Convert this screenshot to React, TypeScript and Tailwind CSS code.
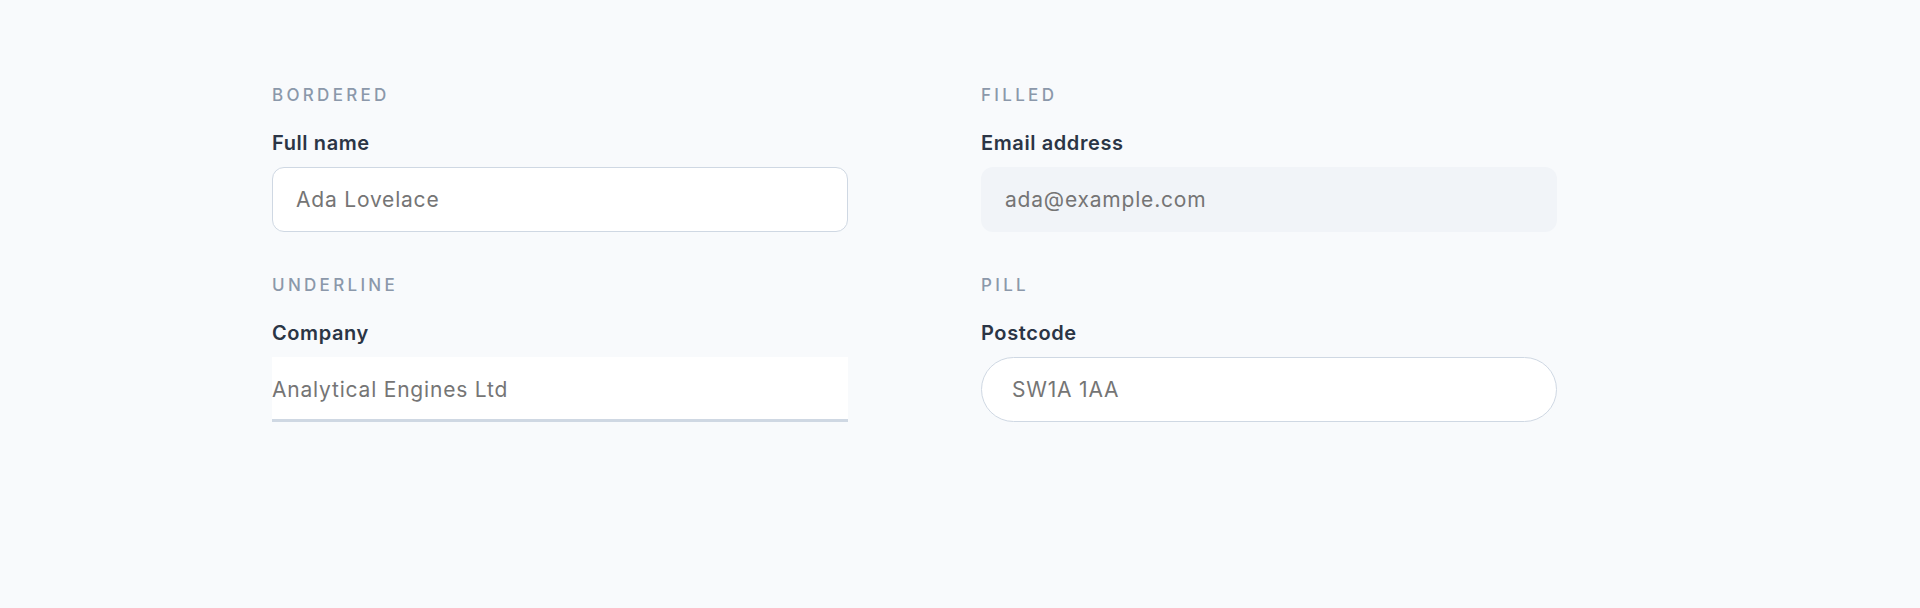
import React from 'react'

interface FieldProps {
  section: string
  label: string
  placeholder: string
  inputClass: string
}

function Field({ section, label, placeholder, inputClass }: FieldProps) {
  return (
    <div className="flex flex-col">
      <p className="text-[17px] leading-[20px] font-medium tracking-[3.3px] text-[#8b98aa] uppercase">{section}</p>
      <label className="mt-[26px] text-[20px] leading-[24px] font-semibold tracking-[0.6px] text-[#2b3545]">{label}</label>
      <input
        type="text"
        placeholder={placeholder}
        className={`mt-[12px] w-[576px] h-[65px] text-[21px] tracking-[0.8px] outline-none placeholder:text-[#757575] ${inputClass}`}
      />
    </div>
  )
}

export default function App() {
  return (
    <div className="min-h-[608px] w-full bg-[#f8fafc] font-['Inter',sans-serif]">
      <div className="pl-[272px] pt-[85px] grid grid-cols-[576px_576px] gap-x-[133px] gap-y-[43px]">
        {/* bordered */}
        <Field
          section="Bordered"
          label="Full name"
          placeholder="Ada Lovelace"
          inputClass="bg-white border border-[#cfd8e3] rounded-xl pl-[23px]"
        />
        {/* filled */}
        <Field
          section="Filled"
          label="Email address"
          placeholder="ada@example.com"
          inputClass="bg-[#f1f4f8] rounded-xl pl-6"
        />
        {/* underline */}
        <Field
          section="Underline"
          label="Company"
          placeholder="Analytical Engines Ltd"
          inputClass="bg-white border-b-[3px] border-[#cfd8e3] pt-[3px]"
        />
        {/* pill */}
        <Field
          section="Pill"
          label="Postcode"
          placeholder="SW1A 1AA"
          inputClass="bg-white border border-[#cfd8e3] rounded-full pl-[30px]"
        />
      </div>
    </div>
  )
}
